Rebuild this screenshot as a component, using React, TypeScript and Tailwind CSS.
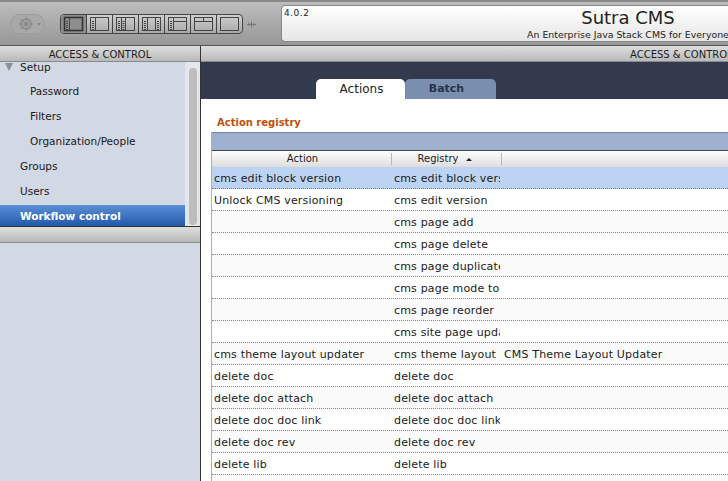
const segments = [
  { left: 2, right: 0, top: 0, split: false },
  { left: 1, right: 0, top: 0, split: false },
  { left: 2, right: 0, top: 0, split: false },
  { left: 1, right: 1, top: 0, split: false },
  { left: 1, right: 0, top: 1, split: false },
  { left: 0, right: 0, top: 1, split: true },
  { left: 0, right: 0, top: 0, split: false },
];

const sideItems = [
  { label: "Password", sub: true },
  { label: "Filters", sub: true },
  { label: "Organization/People", sub: true },
  { label: "Groups", sub: false },
  { label: "Users", sub: false },
];

const rows = [
  ["cms edit block version", "cms edit block version", ""],
  ["Unlock CMS versioning", "cms edit version", ""],
  ["", "cms page add", ""],
  ["", "cms page delete", ""],
  ["", "cms page duplicate", ""],
  ["", "cms page mode toggle", ""],
  ["", "cms page reorder", ""],
  ["", "cms site page update", ""],
  ["cms theme layout updater", "cms theme layout", "CMS Theme Layout Updater"],
  ["delete doc", "delete doc", ""],
  ["delete doc attach", "delete doc attach", ""],
  ["delete doc doc link", "delete doc doc link", ""],
  ["delete doc rev", "delete doc rev", ""],
  ["delete lib", "delete lib", ""],
  ["", "", ""],
];

function Dots({ x }: { x: number }) {
  return (
    <g fill="#444">
      <rect x={x} y={6} width={2} height={1} />
      <rect x={x} y={8} width={2} height={1} />
      <rect x={x} y={10} width={2} height={1} />
      <rect x={x} y={12} width={2} height={1} />
      <rect x={x} y={14} width={2} height={1} />
    </g>
  );
}

function LayoutIcon({ seg, active }: { seg: (typeof segments)[number]; active: boolean }) {
  return (
    <svg width="25" height="18" viewBox="0 0 25 18">
      <rect x="3.5" y="2.5" width="18" height="13" fill="none" stroke={active ? "#333" : "#444"} strokeWidth={active ? 1.6 : 1} />
      {seg.left >= 1 && <path d="M8.5 3v12" stroke="#444" />}
      {seg.left >= 1 && <Dots x={5} />}
      {seg.left === 2 && !active && <path d="M12.5 3v12" stroke="#444" />}
      {seg.left === 2 && !active && <Dots x={9.5} />}
      {seg.right === 1 && <path d="M16.5 3v12" stroke="#444" />}
      {seg.right === 1 && <Dots x={18} />}
      {seg.top === 1 && !seg.split && <path d="M9 6.5h12" stroke="#444" />}
      {seg.split && <path d="M4 6.5h17M12.5 3v3.5" stroke="#444" />}
    </svg>
  );
}

function GearIcon() {
  return (
    <svg width="16" height="16" viewBox="0 0 16 16" fill="none" stroke="#8a8a8a">
      <circle cx="8" cy="8" r="5" strokeWidth="1.5" />
      <circle cx="8" cy="8" r="1.5" fill="#8a8a8a" />
      <path d="M8 1v14M1 8h14M3 3l10 10M13 3L3 13" strokeWidth="1" />
    </svg>
  );
}

function AddIcon() {
  return (
    <svg width="9" height="9" viewBox="0 0 9 9" fill="none" stroke="#777">
      <path d="M0 4.5h9M4.5 1.5v6M2 3v3M7 3v3" />
    </svg>
  );
}

function Toolbar() {
  return (
    <div className="h-[46px] shrink-0 flex bg-gradient-to-b from-[#bdbdbd] to-[#979797] border-t-2 border-t-[#8a8a8a] border-b border-b-[#555]">
      <div className="w-[281px] shrink-0 flex items-center pl-[10px] pt-[1px]">
        <div className="w-[35px] h-[20px] rounded-full border border-[#9c9c9c] bg-[#a9a9a9] flex items-center pl-[7px] gap-[3px]">
          <GearIcon />
          <div className="w-0 h-0 border-x-[2.5px] border-x-transparent border-t-[3px] border-t-[#8a8a8a]" />
        </div>
        <div className="ml-[15px] h-[20px] w-[183px] flex rounded-[4px] border border-[#444] bg-gradient-to-b from-[#cfcfcf] to-[#a9a9a9] overflow-hidden">
          {segments.map((seg, i) => (
            <div
              key={i}
              className={`w-[26px] h-full flex items-center justify-center border-r border-[#444] last:border-r-0 ${i === 0 ? "bg-[#8e8e8e]" : ""}`}
            >
              <LayoutIcon seg={seg} active={i === 0} />
            </div>
          ))}
        </div>
        <div className="ml-[4px]">
          <AddIcon />
        </div>
      </div>
      <div className="flex-1 min-w-0 mt-[3px] mb-[3px] overflow-hidden rounded-l-[4px] border-l border-y border-[#888] bg-gradient-to-b from-[#ffffff] to-[#e6e6e6] flex">
        <span className="w-[243px] shrink-0 pl-[2px] text-[9px] leading-[11px] text-[#222] tracking-[0.5px] pt-[2px]">4.0.2</span>
        <div className="shrink-0 w-[206px] flex flex-col items-center whitespace-nowrap text-[#222]">
          <span className="text-[18px] leading-[22px] mt-[1px]">Sutra CMS</span>
          <span className="text-[9.4px] leading-[12px]">An Enterprise Java Stack CMS for Everyone</span>
        </div>
      </div>
    </div>
  );
}

function PaneHeader({ children }: { children?: React.ReactNode }) {
  return (
    <div className="h-[16px] shrink-0 flex items-center pt-[1px] whitespace-nowrap bg-gradient-to-b from-[#dedede] to-[#b9b9b9] border-b border-[#8a8a8a] text-[10px] text-[#1c1c1c]">
      {children}
    </div>
  );
}

function Sidebar() {
  return (
    <div className="w-[201px] shrink-0 flex flex-col border-r border-[#333] bg-[#d2d8e4]">
      <PaneHeader>
        <span className="w-full text-center">ACCESS &amp; CONTROL</span>
      </PaneHeader>
      <div className="h-[165px] flex overflow-hidden border-b border-[#333]">
        <div className="flex-1 text-[10.5px] text-[#1a1a1a]">
          <div className="h-[25px] -mt-[8px] pt-[3px] flex items-center pl-[20px] relative">
            Setup
            <div className="absolute left-[5px] top-[9px] w-0 h-0 border-x-[4px] border-x-transparent border-t-[8px] border-t-[#8b8f96]" />
          </div>
          {sideItems.map((item) => (
            <div key={item.label} className={`h-[25px] flex items-center ${item.sub ? "pl-[30px]" : "pl-[20px]"}`}>
              {item.label}
            </div>
          ))}
          <div className="h-[22px] mt-[1px] pt-[2px] flex items-center pl-[20px] font-bold text-white bg-gradient-to-b from-[#5b90d6] to-[#1f56a8]">
            Workflow control
          </div>
        </div>
        <div className="w-[15px] shrink-0 bg-[#e3e6ec] flex justify-center pt-[6px] pb-[1px]">
          <div className="w-[8px] h-[157px] rounded-full bg-[#bdbdbd]" />
        </div>
      </div>
      <PaneHeader />
    </div>
  );
}

function Table() {
  return (
    <div className="ml-[10px] border-l border-[#a5b0cf] text-[#1a1a1a]">
      <div className="h-[19px] bg-[#a0b0cf] border-t border-[#6f86a6] border-b border-b-[#444]" />
      <div className="h-[16px] flex bg-gradient-to-b from-[#ffffff] to-[#dddddd] text-[10px] text-[#222]">
        <div className="w-[180px] shrink-0 pl-[2px] text-center leading-[15px] border-r border-[#b5b5b5] my-[2px]">
          <span className="relative -top-[2px]">Action</span>
        </div>
        <div className="w-[110px] shrink-0 flex items-center justify-center gap-[8px] pr-[3px] border-r border-[#b5b5b5] my-[2px]">
          <span className="relative -top-[1px]">Registry</span>
          <div className="w-0 h-0 border-x-[3px] border-x-transparent border-b-[3px] border-b-[#222]" />
        </div>
      </div>
      {rows.map((row, i) => (
        <div
          key={i}
          className={`h-[22px] pt-[4px] flex items-center text-[11px] tracking-[0.17px] border-b border-dotted ${
            i === 0 ? "bg-[#bcd4f2] border-b-[#777]" : i % 2 === 1 ? "bg-white border-b-[#888]" : "bg-[#fafafa] border-b-[#888]"
          }`}
        >
          <div className="w-[180px] shrink-0 pl-[2px] whitespace-nowrap overflow-hidden">{row[0]}</div>
          <div className="w-[108px] shrink-0 pl-[2px] whitespace-nowrap overflow-hidden">{row[1]}</div>
          <div className="pl-[4px] whitespace-nowrap">{row[2]}</div>
        </div>
      ))}
    </div>
  );
}

export default function App() {
  return (
    <div className="w-[728px] h-[481px] flex flex-col overflow-hidden bg-white font-['DejaVu_Sans',sans-serif]">
      <Toolbar />
      <div className="flex-1 min-h-0 flex">
        <Sidebar />
        <div className="flex-1 min-w-0 flex flex-col overflow-hidden">
          <PaneHeader>
            <span className="ml-[429px]">ACCESS &amp; CONTROL</span>
          </PaneHeader>
          <div className="h-[37px] shrink-0 bg-[#333a4d] flex items-end pl-[115px]">
            <div className="w-[89px] h-[20px] pl-[2px] rounded-t-[5px] bg-white flex items-center justify-center text-[12px] text-[#222]">Actions</div>
            <div className="w-[91px] h-[20px] pr-[8px] rounded-t-[5px] bg-[#7a8fb0] flex items-center justify-center text-[11px] font-bold text-[#28324a]">Batch</div>
          </div>
          <div className="h-[33px] shrink-0 pl-[16px] pt-[18px] text-[10px] leading-[12px] font-bold text-[#c14f0a]">Action registry</div>
          <Table />
        </div>
      </div>
    </div>
  );
}
